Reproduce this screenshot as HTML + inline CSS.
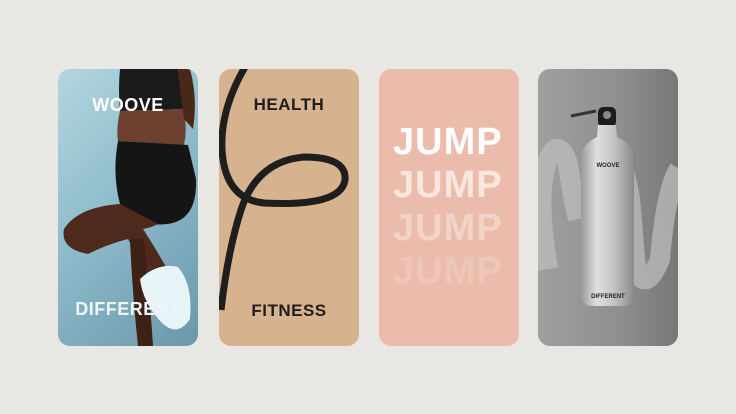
<!DOCTYPE html>
<html><head><style>
body{margin:0;width:736px;height:414px;background:#e8e7e4;position:relative;overflow:hidden;font-family:"Liberation Sans",sans-serif}
.c{position:absolute;top:69px;width:140px;height:277px;border-radius:12px;overflow:hidden}
.t{position:absolute;left:0;width:100%;text-align:center;font-weight:bold;letter-spacing:0.5px}
</style></head><body>
<div class="c" style="left:58px;background:linear-gradient(135deg,#b3d6e1 0%,#8fbccb 45%,#6a98ab 100%)">
<svg width="140" height="277" style="position:absolute;left:0;top:0">
<path d="M62 0 L120 0 L125 40 L62 42 Q60 20 62 0Z" fill="#1a1a1a"/>
<path d="M62 42 Q58 60 60 72 L126 76 Q130 58 125 40 Z" fill="#6e4030"/>
<path d="M120 0 L132 0 Q140 30 135 60 L126 50 Z" fill="#4a2818"/>
<path d="M60 72 Q54 105 62 135 L95 155 Q140 160 138 110 L130 76 Z" fill="#151515"/>
<path d="M62 135 Q20 138 6 160 Q2 180 30 185 Q50 175 70 170 L78 185 L95 212 L112 205 Q98 180 85 160 Q95 158 100 155 Z" fill="#4e2a1c"/>
<path d="M72 170 L86 170 Q92 230 95 277 L80 277 Q74 220 72 170Z" fill="#3e2014"/>
<path d="M82 210 Q100 193 120 198 Q135 215 132 250 Q120 268 105 255 Q85 235 82 210Z" fill="#e6f3f7"/>
</svg>
<div class="t" style="top:26px;font-size:18px;color:#fff">WOOVE</div>
<div class="t" style="top:230px;font-size:18px;color:#eef5f8">DIFFERENT</div>
</div>
<div class="c" style="left:219px;background:#d7b28f">
<svg width="140" height="277" style="position:absolute;left:0;top:0">
<path d="M26 -2 Q1 41 3 81 Q6 130 45 134 Q122 138 126 111 Q128 88 85 88 Q38 92 22 141 Q9 181 2 241" fill="none" stroke="#1e1e1e" stroke-width="7"/>
</svg>
<div class="t" style="top:26px;font-size:17px;color:#1e1e1e">HEALTH</div>
<div class="t" style="top:232px;font-size:17px;color:#1e1e1e">FITNESS</div>
</div>
<div class="c" style="left:379px;background:#ebbcab">
<div style="position:absolute;left:14px;top:52px;font-size:38px;line-height:43px;font-weight:bold;letter-spacing:1px">
<div style="color:#fff">JUMP</div><div style="color:#f8e6df">JUMP</div><div style="color:#f2d3c8">JUMP</div><div style="color:#edc7b9">JUMP</div></div>
</div>
<div class="c" style="left:538px;background:linear-gradient(90deg,#a0a0a0,#8e8e8e 60%,#777)">
<svg width="141" height="277" style="position:absolute;left:0;top:0">
<path d="M10 200 Q-2 130 8 95 Q20 65 30 95 Q35 130 40 150 M42 150 Q50 110 65 95 Q85 80 92 130 L98 200 Q108 225 122 190 Q128 120 141 100" fill="none" stroke="#bcbcbc" stroke-width="20" opacity="0.75"/>
<path d="M33 47 L58 42" stroke="#333" stroke-width="3"/>
<rect x="60" y="38" width="18" height="20" rx="5" fill="#1c1c1c"/>
<circle cx="69" cy="46" r="4" fill="#888"/>
<path d="M60 56 L78 56 L79 68 Q96 76 96 88 L96 225 Q96 237 85 237 L54 237 Q43 237 43 225 L43 88 Q43 76 59 68Z" fill="url(#g)"/>
<defs><linearGradient id="g" x1="0" x2="1"><stop offset="0" stop-color="#9a9a9a"/><stop offset=".3" stop-color="#e0e0e0"/><stop offset=".6" stop-color="#c6c6c6"/><stop offset="1" stop-color="#8a8a8a"/></linearGradient></defs>
<text x="70" y="98" font-size="6" text-anchor="middle" font-family="Liberation Sans" font-weight="bold" fill="#222">WOOVE</text>
<text x="70" y="229" font-size="6" text-anchor="middle" font-family="Liberation Sans" font-weight="bold" fill="#222">DIFFERENT</text>
</svg>
</div>
</body></html>
